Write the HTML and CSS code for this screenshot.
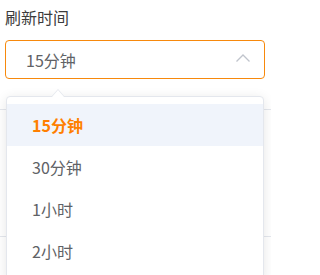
FILE: index.html
```html
<!DOCTYPE html>
<html lang="zh">
<head>
<meta charset="utf-8">
<link rel="stylesheet" href="styles.css">
</head>
<body>
<div class="page">
  <div class="field">
    <div class="label">刷新时间</div>
    <div class="select">
      <span class="value">15分钟</span>
      <svg class="chevron" width="16" height="10" viewBox="0 0 16 10"><path d="M1.5 8.5 L8 2 L14.5 8.5" fill="none" stroke="#c0c4cc" stroke-width="1.3"/></svg>
    </div>
  </div>
  <div class="rows">
    <div class="row"></div>
    <div class="row"></div>
  </div>
  <div class="dropdown">
    <div class="arrow"></div>
    <ul class="options">
      <li class="option selected">15分钟</li>
      <li class="option">30分钟</li>
      <li class="option">1小时</li>
      <li class="option">2小时</li>
    </ul>
  </div>
</div>
</body>
</html>
```

FILE: styles.css
```css
* { box-sizing: border-box; }
html, body { margin: 0; padding: 0; background: #fff; overflow: hidden; }
body {
  font-family: "Noto Sans CJK SC", "Noto Sans", sans-serif;
  width: 271px;
  height: 275px;
}
.page { position: relative; height: 275px; overflow: hidden; }
.field { padding: 5px 6px 0 5px; }
.label {
  font-size: 16px;
  line-height: 24px;
  color: #3c3c3c;
  height: 24px;
}
.select {
  margin-top: 11px;
  height: 39px;
  border: 1px solid #f7890c;
  border-radius: 4px;
  display: flex;
  align-items: center;
  justify-content: space-between;
  padding: 0 13px 0 20px;
}
.value { font-size: 16px; color: #606266; line-height: 22px; }
.chevron { display: block; margin-top: -3px; }
.rows { margin-top: 30px; }
.row { height: 127px; border-top: 1px solid #e4e7ed; }
.dropdown {
  position: absolute;
  left: 6px;
  top: 96px;
  width: 258px;
  height: 184px;
  background: #fff;
  border: 1px solid #e4e7ed;
  border-radius: 4px;
  box-shadow: 0 2px 12px rgba(0, 0, 0, 0.1);
}
.arrow {
  position: absolute;
  top: -8px;
  left: 44px;
  width: 0;
  height: 0;
  border-left: 7px solid transparent;
  border-right: 7px solid transparent;
  border-bottom: 8px solid #e4e7ed;
}
.arrow::after {
  content: "";
  position: absolute;
  left: -6px;
  top: 1px;
  border-left: 6px solid transparent;
  border-right: 6px solid transparent;
  border-bottom: 7px solid #fff;
}
.options { list-style: none; margin: 0; padding: 7px 0 0; }
.option {
  height: 42px;
  line-height: 42px;
  padding-left: 25px;
  font-size: 16px;
  color: #606266;
}
.option.selected {
  background: #f0f4fb;
  color: #ff7f00;
  font-weight: 700;
}
```
